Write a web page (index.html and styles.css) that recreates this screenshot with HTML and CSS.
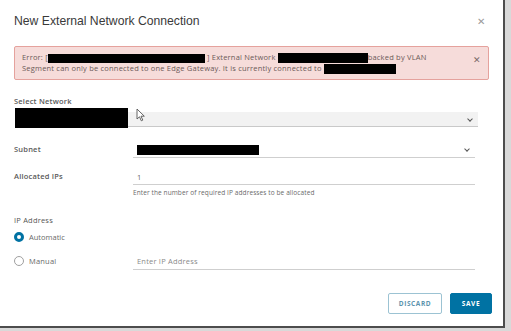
FILE: index.html
```html
<!DOCTYPE html>
<html lang="en">
<head>
    <meta charset="UTF-8">
    <title>New External Network Connection</title>
    <link rel="stylesheet" href="styles.css">
</head>
<body>
    <div class="modal">
        <div class="modal-header">
            <h3 class="modal-title">New External Network Connection</h3>
            <span class="close">&#x2715;</span>
        </div>

        <div class="alert">
            <div class="alert-text">
                <div>Error: [<span class="redact r1"></span> ] External Network <span class="redact r2"></span>backed by VLAN</div>
                <div>Segment can only be connected to one Edge Gateway. It is currently connected to <span class="redact r3"></span></div>
            </div>
            <span class="alert-close">&#x2715;</span>
        </div>

        <div class="form">
            <div class="block-label">Select Network</div>
            <div class="network-select">
                <span class="redact r4"></span>
                <svg class="cursor" width="10" height="14" viewBox="0 0 10 14">
                    <path d="M1 1 L1 11 L3.5 8.8 L5.3 12.8 L6.8 12.1 L5 8.2 L8.3 8.2 Z" fill="#fff" stroke="#555" stroke-width="0.9"/>
                </svg>
                <span class="chevron"></span>
            </div>

            <div class="row subnet-row">
                <label class="row-label">Subnet</label>
                <div class="field select-field">
                    <span class="redact r5"></span>
                    <span class="chevron"></span>
                </div>
            </div>

            <div class="row alloc-row">
                <label class="row-label">Allocated IPs</label>
                <div class="field">1</div>
            </div>
            <div class="helper">Enter the number of required IP addresses to be allocated</div>

            <div class="block-label ip-label">IP Address</div>
            <div class="radio-row">
                <span class="radio checked"></span>
                <span class="radio-text">Automatic</span>
            </div>
            <div class="row manual-row">
                <div class="row-label radio-row">
                    <span class="radio"></span>
                    <span class="radio-text">Manual</span>
                </div>
                <div class="field placeholder">Enter IP Address</div>
            </div>
        </div>

        <div class="modal-footer">
            <button class="btn btn-outline">DISCARD</button>
            <button class="btn btn-primary">SAVE</button>
        </div>
    </div>
</body>
</html>
```

FILE: styles.css
```css
body {
    margin: 0;
    background-color: #d9d9d9;
    font-family: "Open Sans", Arial, sans-serif;
    color: #616161;
}
.modal {
    width: 505px;
    height: 328px;
    box-sizing: border-box;
    background-color: #ffffff;
    border-right: 2px solid #4d4d4d;
    border-bottom: 2px solid #4d4d4d;
    position: relative;
}
.modal-header {
    display: flex;
    align-items: center;
    justify-content: space-between;
    padding: 10px 18px 0 14px;
    height: 22px;
}
.modal-title {
    margin: 0;
    font-family: "Liberation Sans", Arial, sans-serif;
    font-size: 12.2px;
    font-weight: 400;
    color: #3a3a3a;
}
.close {
    font-size: 10px;
    color: #9a9a9a;
}
.alert {
    margin: 14px 14px 0 14px;
    height: 34px;
    box-sizing: border-box;
    background-color: #f6dcda;
    border: 1px solid #e5a29d;
    border-radius: 2px;
    display: flex;
    justify-content: space-between;
    padding: 5px 7px 0 7px;
}
.alert-text {
    font-size: 7.5px;
    letter-spacing: 0.2px;
    line-height: 11px;
    color: #6b5a58;
}
.alert-close {
    font-size: 9px;
    color: #7a6a68;
    margin-top: 1px;
}
.redact {
    display: inline-block;
    background-color: #000000;
    vertical-align: middle;
    letter-spacing: 0;
}
.r1 { width: 157px; height: 9px; }
.r2 { width: 90px; height: 10px; }
.r3 { width: 72px; height: 10px; }
.r4 { width: 113px; height: 20px; }
.r5 { width: 122px; height: 10px; }
.form {
    padding: 0 14px;
}
.block-label {
    margin-top: 16px;
    font-size: 7.5px;
    letter-spacing: 0.2px;
    font-weight: 600;
    color: #5a5a5a;
    height: 10px;
}
.network-select {
    margin-top: 2px;
    margin-left: 1px;
    margin-right: 11px;
    height: 20px;
    display: flex;
    align-items: flex-end;
    position: relative;
}
.network-select::after {
    content: "";
    position: absolute;
    left: 113px;
    right: 0;
    bottom: 1px;
    height: 14px;
    background-color: #f2f2f2;
    border-bottom: 1px solid #c9c9c9;
    z-index: 0;
}
.network-select .redact,
.network-select .cursor,
.network-select .chevron {
    position: relative;
    z-index: 1;
}
.cursor {
    margin-left: 8px;
    align-self: flex-start;
}
.network-select .chevron {
    margin-left: auto;
    margin-right: 6px;
    margin-bottom: 7px;
}
.chevron {
    width: 3px;
    height: 3px;
    border-right: 1px solid #555;
    border-bottom: 1px solid #555;
    transform: rotate(45deg);
}
.row {
    display: flex;
    align-items: flex-end;
    margin-top: 14px;
}
.subnet-row {
    margin-top: 15px;
}
.alloc-row {
    margin-top: 12px;
}
.row-label {
    width: 119px;
    font-size: 7.5px;
    letter-spacing: 0.2px;
    font-weight: 600;
    color: #5a5a5a;
    padding-bottom: 4px;
}
.field {
    flex: 1;
    margin-right: 14px;
    height: 14px;
    border-bottom: 1px solid #cfcfcf;
    font-size: 7.5px;
    letter-spacing: 0.2px;
    line-height: 12px;
    padding-left: 4px;
    color: #6a6a6a;
    display: flex;
    align-items: center;
}
.select-field .chevron {
    margin-left: auto;
    margin-right: 6px;
    margin-top: -3px;
}
.helper {
    margin-left: 119px;
    margin-top: 3px;
    font-size: 6.5px;
    letter-spacing: 0.1px;
    color: #6a6a6a;
}
.ip-label {
    margin-top: 18px;
    font-weight: 400;
    color: #555555;
}
.radio-row {
    display: flex;
    align-items: center;
    margin-top: 7px;
}
.radio {
    width: 8px;
    height: 8px;
    border-radius: 50%;
    border: 1px solid #a0a0a0;
    box-sizing: content-box;
}
.radio.checked {
    border: 3px solid #0072a3;
    width: 4px;
    height: 4px;
    background-color: #ffffff;
}
.radio-text {
    margin-left: 5px;
    font-size: 7.5px;
    color: #6a6a6a;
}
.manual-row {
    margin-top: 11px;
}
.manual-row .row-label {
    font-weight: 400;
    margin-top: 0;
    padding-bottom: 4px;
}
.placeholder {
    color: #8a8a8a;
    height: 16px;
}
.modal-footer {
    display: flex;
    justify-content: flex-end;
    gap: 8px;
    padding: 23px 11px 0 0;
}
.btn {
    height: 21px;
    font-family: "Open Sans", Arial, sans-serif;
    font-size: 6.5px;
    font-weight: 700;
    letter-spacing: 0.6px;
    border-radius: 2px;
    padding: 0;
}
.btn-outline {
    width: 54px;
    background-color: #ffffff;
    color: #5c93ad;
    border: 1px solid #9cc3d3;
}
.btn-primary {
    width: 42px;
    background-color: #0072a3;
    color: #ffffff;
    border: 1px solid #0072a3;
}
```
